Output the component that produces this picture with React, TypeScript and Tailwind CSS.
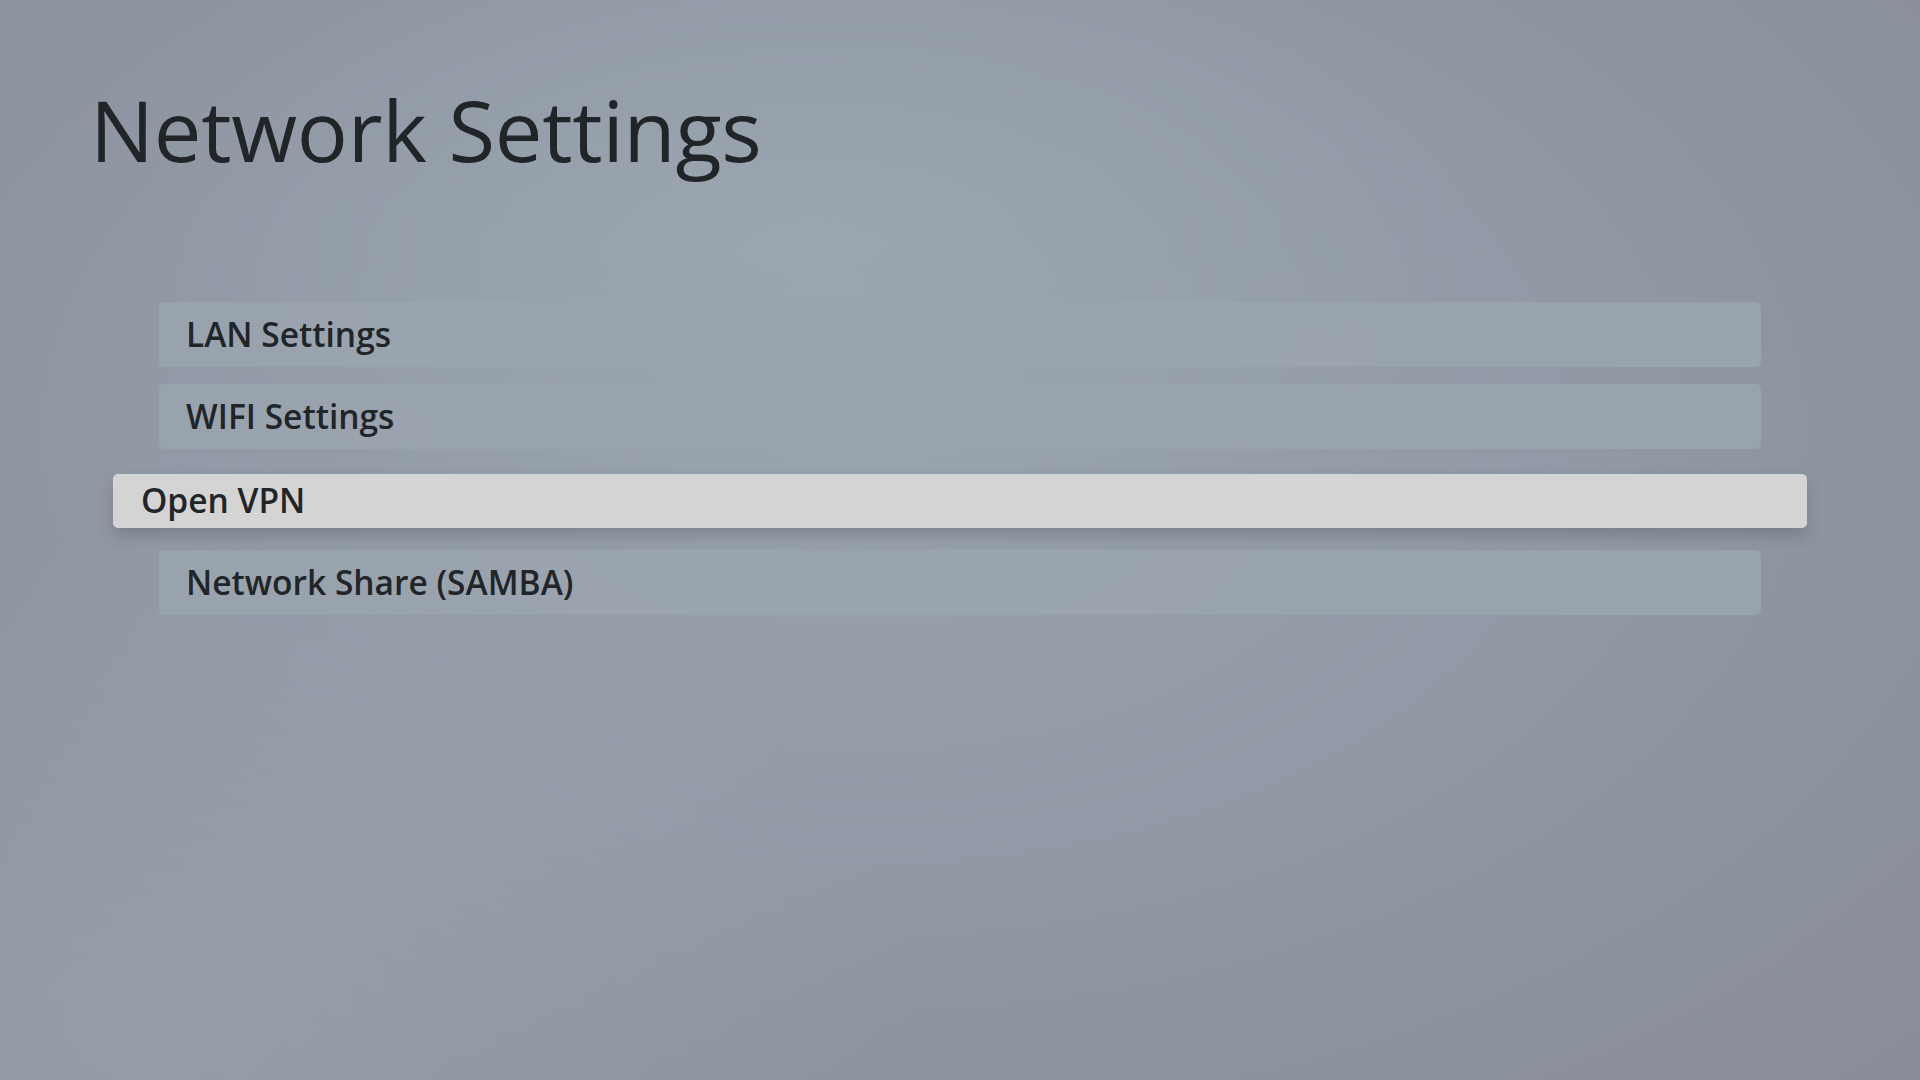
const items = [
  { label: 'LAN Settings', active: false },
  { label: 'WIFI Settings', active: false },
  { label: 'Open VPN', active: true },
  { label: 'Network Share (SAMBA)', active: false },
];

export default function App() {
  return (
    <div className="min-h-screen w-full overflow-hidden bg-[#8e97a3] bg-[radial-gradient(ellipse_35%_30%_at_42%_22%,rgba(160,172,182,0.55),transparent),radial-gradient(ellipse_40%_45%_at_8%_95%,rgba(160,170,180,0.5),transparent),radial-gradient(ellipse_at_45%_40%,#98a2ac_0%,#919aa6_45%,#8c929e_75%,#898d97_100%)] font-['Open_Sans',sans-serif] text-[#212528]">
      <h1 className="pl-[90px] pt-[87px] text-[85px] font-medium leading-none tracking-[-0.003em]">
        Network Settings
      </h1>

      <div className="ml-[113px] mt-[130px] flex w-[1694px] flex-col gap-[17px]">
        {items.map((item) =>
          item.active ? (
            <div
              key={item.label}
              className="mt-[8px] mb-[5px] flex h-[54px] items-center rounded-[5px] bg-[#d4d4d4] pb-[2px] pl-[28px] text-[33.5px] font-semibold shadow-[0_8px_14px_rgba(60,64,75,0.25)]"
            >
              {item.label}
            </div>
          ) : (
            <div
              key={item.label}
              className="mx-[46px] flex h-[65px] items-center rounded-[5px] bg-[#9aa4ae]/90 pl-[27px] text-[33.5px] font-semibold"
            >
              {item.label}
            </div>
          )
        )}
      </div>
    </div>
  );
}
